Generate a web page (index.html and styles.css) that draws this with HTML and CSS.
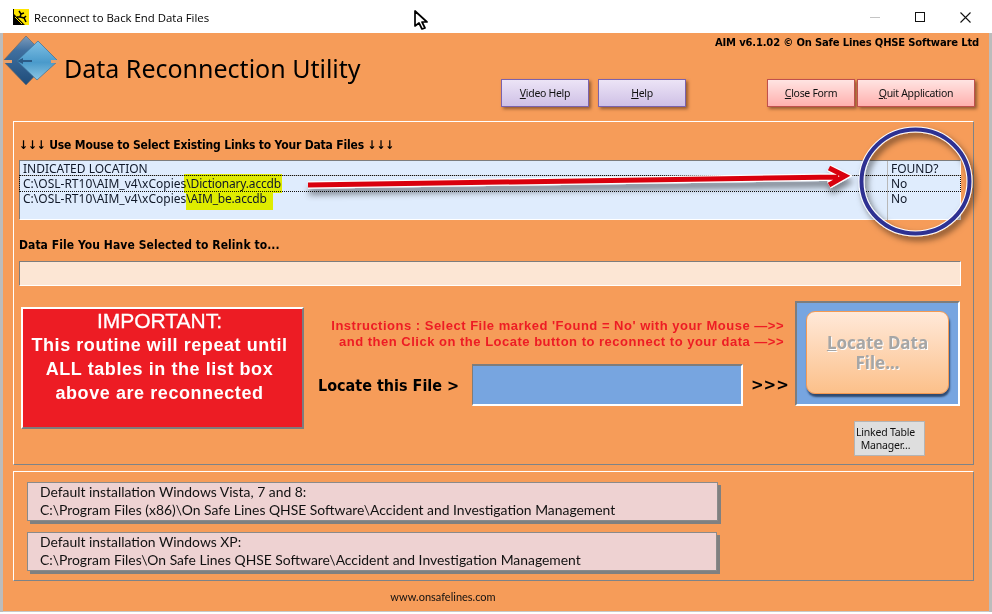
FILE: index.html
```html
<!DOCTYPE html>
<html lang="en">
<head>
<meta charset="utf-8">
<title>Reconnect to Back End Data Files</title>
<link rel="stylesheet" href="styles.css">
</head>
<body>
<div class="window">
  <header class="titlebar">
    <svg class="app-icon" width="16" height="16" viewBox="0 0 16 16"><rect width="16" height="16" fill="#ffe600"/><path d="M0 0H1V5L12 16H0Z" fill="#000"/><path d="M2 8 9 15" stroke="#ffe600" stroke-width="1"/><path d="M6 2 8 5 7 8 11 9 13 13M8 5 11 4M7 8 4 8M11 9 13 7" stroke="#000" stroke-width="1.5" fill="none"/></svg>
    <span class="title-text">Reconnect to Back End Data Files</span>
    <div class="win-controls">
      <span class="win-min"></span>
      <span class="win-max"></span>
      <svg class="win-close" width="11" height="11" viewBox="0 0 11 11"><path d="M.5.5l10 10M10.5.5l-10 10" stroke="#111" stroke-width="1.1"/></svg>
    </div>
  </header>
  <main class="form">
    <section class="form-head">
      <div class="brand">
        <svg class="logo" width="56" height="50" viewBox="0 0 56 50">
          <defs>
            <linearGradient id="lg1" x1="0" y1="0" x2="0" y2="1"><stop offset="0" stop-color="#7d9cbc"/><stop offset=".3" stop-color="#3f6f9f"/><stop offset="1" stop-color="#1f4c7a"/></linearGradient>
            <linearGradient id="lg2" x1="0" y1="0" x2="0" y2="1"><stop offset="0" stop-color="#7fc0e4"/><stop offset=".55" stop-color="#4a9acb"/><stop offset="1" stop-color="#8cc6e4"/></linearGradient>
          </defs>
          <path d="M23 0 47 24 23 49 0 25Z" fill="url(#lg1)" stroke="#6f6a68" stroke-width=".7"/>
          <path d="M35 5 55 25 34 44 14 25Z" fill="url(#lg2)" stroke="#3a6f98" stroke-width=".7"/>
          <path d="M0 24h9v3H0ZM48 24h8v3H48Z" fill="#e8a06a"/>
          <path d="M14 25 20 22v2h9v2h-9v2Z" fill="#2b5b87"/>
        </svg>
        <h1 class="app-title">Data Reconnection Utility</h1>
      </div>
      <div class="head-right">
        <p class="version">AIM v6.1.02 © On Safe Lines QHSE Software Ltd</p>
        <div class="head-buttons">
          <button class="btn btn-purple btn-help-first"><u>V</u>ideo Help</button>
          <button class="btn btn-purple btn-help-second"><u>H</u>elp</button>
          <button class="btn btn-red btn-close"><u>C</u>lose Form</button>
          <button class="btn btn-red btn-quit"><u>Q</u>uit Application</button>
        </div>
      </div>
    </section>

    <section class="panel panel-main">
      <h2 class="list-heading">↓↓↓ Use Mouse to Select Existing Links to Your Data Files ↓↓↓</h2>
      <div class="listbox">
        <div class="list-row"><span class="col-loc">INDICATED LOCATION</span><span class="col-found">FOUND?</span></div>
        <div class="list-row selected"><span class="col-loc">C:\OSL-RT10\AIM_v4\xCopies<mark class="hl-one">\Dictionary.accdb</mark></span><span class="col-found">No</span></div>
        <div class="list-row"><span class="col-loc">C:\OSL-RT10\AIM_v4\xCopies<mark class="hl-two">\AIM_be.accdb</mark></span><span class="col-found">No</span></div>
        <div class="list-row"><span class="col-loc"></span><span class="col-found"></span></div>
      </div>
      <h2 class="relink-label">Data File You Have Selected to Relink to...</h2>
      <div class="relink-input"></div>
      <div class="action-row">
        <div class="important">
          <div class="imp-title">IMPORTANT:</div>
          <div>This routine will repeat until</div>
          <div>ALL tables in the list box</div>
          <div>above are reconnected</div>
        </div>
        <div class="action-mid">
          <p class="instructions">Instructions : Select File marked 'Found = No' with your Mouse —&gt;&gt;<br>and then Click on the Locate button to reconnect to your data —&gt;&gt;</p>
          <div class="locate-line">
            <span class="locate-label">Locate this File &gt;</span>
            <div class="locate-field"></div>
            <span class="locate-arrows">&gt;&gt;&gt;</span>
          </div>
        </div>
        <div class="action-right">
          <div class="locate-box"><button class="locate-btn"><u>L</u>ocate Data File...</button></div>
          <button class="linked-btn">Linked Table Manager…</button>
        </div>
      </div>
    </section>

    <section class="panel panel-paths">
      <div class="path-card card-a">
        <div>Default installation Windows Vista, 7 and 8:</div>
        <div>C:\Program Files (x86)\On Safe Lines QHSE Software\Accident and Investigation Management</div>
      </div>
      <div class="path-card card-b">
        <div>Default installation Windows XP:</div>
        <div>C:\Program Files\On Safe Lines QHSE Software\Accident and Investigation Management</div>
      </div>
    </section>
    <footer class="site">www.onsafelines.com</footer>
  </main>

  <svg class="annotation" width="992" height="614" viewBox="0 0 992 614">
    <defs>
      <filter id="sh" x="-10%" y="-50%" width="120%" height="250%"><feDropShadow dx="1" dy="6" stdDeviation="3" flood-color="#000" flood-opacity=".45"/></filter>
      <filter id="sh2" x="-20%" y="-20%" width="140%" height="140%"><feDropShadow dx="3" dy="4" stdDeviation="3" flood-color="#000" flood-opacity=".5"/></filter>
    </defs>
    <g filter="url(#sh)">
      <path d="M308 185 L838 177 M829 168 L845 176 L829 185" fill="none" stroke="#fff" stroke-width="7.5"/>
      <path d="M308 185 L838 177 M829 168 L845 176 L829 185" fill="none" stroke="#d9000d" stroke-width="5"/>
    </g>
    <g filter="url(#sh2)">
      <ellipse cx="915.5" cy="181.5" rx="54" ry="52" fill="none" stroke="#fff" stroke-width="6"/>
    </g>
    <ellipse cx="915.5" cy="181.5" rx="54" ry="52" fill="none" stroke="#2e3192" stroke-width="4"/>
    <path d="M415 11v15l4-3 3 6 3-1-3-6h5Z" fill="#fff" stroke="#000" stroke-width="1.7" stroke-linejoin="round"/>
  </svg>
</div>
</body>
</html>
```
FILE: styles.css
```css
* { box-sizing: border-box; }
html, body { margin: 0; padding: 0; background: #fff; }
.window {
  position: relative;
  width: 992px;
  height: 614px;
  overflow: hidden;
  display: flex;
  flex-direction: column;
  font-family: "Noto Sans", sans-serif;
  color: #000;
}
.titlebar {
  height: 33px;
  flex: none;
  display: flex;
  align-items: center;
  padding: 1px 0 0 13px;
  background: #fff;
  font-family: "Open Sans", sans-serif;
  font-size: 11.4px;
}
.app-icon { margin-right: 5px; }
.win-controls { margin-left: auto; display: flex; align-items: center; }
.win-min { width: 10px; height: 1px; background: #c4c4c4; margin-right: 35px; }
.win-max { width: 10px; height: 10px; border: 1px solid #111; margin-right: 35px; }
.win-close { margin-right: 21px; }

.form {
  flex: 1;
  margin: 0 3px 2px;
  background: #f69c59;
  padding: 0 0 0 10px;
  display: flex;
  flex-direction: column;
  border-bottom: 1px solid #c9c9c9;
  box-shadow: -3px 0 0 #bcbcbc, 3px 0 0 #bcbcbc;
}
.form-head { height: 88px; flex: none; display: flex; justify-content: space-between; }
.brand { display: flex; align-items: flex-start; margin-left: -10px; }
.logo { margin-top: 3px; flex: none; }
.app-title {
  margin: 17px 0 0 5px;
  font-size: 25px;
  line-height: 36px;
  font-weight: 400;
  white-space: nowrap;
}
.head-right { display: flex; flex-direction: column; align-items: flex-end; padding-right: 10px; }
.version {
  margin: 2px 0 0;
  height: 15px;
  font-family: "DejaVu Sans", sans-serif;
  font-size: 10px;
  line-height: 15px;
  font-weight: 700;
  letter-spacing: -.17px;
  white-space: nowrap;
}
.head-buttons { display: flex; margin-top: 29px; margin-right: 4px; }
.btn {
  height: 28px;
  width: 88px;
  padding: 0 0 1px;
  font-family: "Noto Sans", sans-serif;
  font-size: 10.5px;
  letter-spacing: -.3px;
  color: #111;
  border-width: 1px;
  border-style: solid;
  box-shadow: 2px 2px 3px rgba(70,40,20,.55);
}
.btn-purple { background: linear-gradient(#ece4f6, #cfc0e6); border-color: #7b62ad; }
.btn-red { background: linear-gradient(#ffe4e2, #ffb0ae); border-color: #c0504d; }
.btn-help-second { margin-left: 9px; }
.btn-close { margin-left: 81px; }
.btn-quit { margin-left: 2px; width: 118px; }

.panel {
  width: 961px;
  flex: none;
  background: #f69c59;
  border: 1px solid;
  border-color: #fff #7d8388 #7d8388 #fff;
}
.panel-main { height: 344px; padding: 0 12px 0 5px; }
.list-heading, .relink-label {
  margin: 0;
  font-family: "DejaVu Sans Condensed", "DejaVu Sans", sans-serif;
  font-size: 12px;
  line-height: 15px;
  font-weight: 700;
}
.list-heading { margin-top: 16px; letter-spacing: -.17px; }
.listbox {
  margin-top: 7px;
  height: 60px;
  background: #dfecfd;
  border: 1px solid;
  border-color: #7d7d7d #fff #fff #7d7d7d;
  font-family: "Noto Sans", sans-serif;
  font-size: 12px;
  color: #101828;
}
.list-row { display: flex; height: 15px; line-height: 15px; white-space: nowrap; }
.list-row:first-child { border-bottom: 1px solid #b5b5b5; }
.list-row.selected { outline: 1px dotted #111; }
.col-loc { width: 868px; height: 100%; padding-left: 3px; border-right: 1px solid #b8b8b8; }
.col-found { padding-left: 3px; }
.list-row:last-child .col-loc { height: 14px; }
mark { background: #ffff00; color: inherit; letter-spacing: -.18px; mix-blend-mode: multiply; }
.hl-one { padding: 0 1px 1px 2px; margin-left: -2px; box-shadow: 0 -1px 0 #ffff00; }
.hl-two { padding: 0 6px 3px 0; }
.relink-label { margin-top: 18px; letter-spacing: .07px; }
.relink-input {
  margin-top: 8px;
  height: 25px;
  background: #fce6d4;
  border: 1px solid;
  border-color: #7d7d7d #fff #fff #7d7d7d;
}
.action-row { display: flex; margin-top: 15px; }
.important {
  width: 283px;
  height: 122px;
  margin: 6px 0 0 2px;
  padding-right: 6px;
  flex: none;
  background: #ed1c24;
  border: 2px solid;
  border-color: #fff #7d7d7d #7d7d7d #fff;
  color: #fff;
  text-align: center;
  font-family: "Liberation Sans", sans-serif;
  font-size: 18px;
  line-height: 24px;
  font-weight: 700;
  letter-spacing: .57px;
}
.imp-title { font-weight: 400; font-size: 21px; letter-spacing: 0; -webkit-text-stroke: .3px #fff; }
.action-mid { width: 491px; flex: none; display: flex; flex-direction: column; align-items: flex-end; }
.instructions {
  margin: 17px 11px 0 0;
  text-align: right;
  color: #ed1c24;
  font-family: "Liberation Sans", sans-serif;
  font-size: 13px;
  line-height: 16px;
  font-weight: 700;
  letter-spacing: .5px;
  white-space: nowrap;
}
.locate-line { display: flex; align-items: center; width: 477px; margin-top: 14px; }
.locate-label {
  width: 154px;
  font-family: "DejaVu Sans Condensed", "DejaVu Sans", sans-serif;
  font-size: 16px;
  font-weight: 700;
  white-space: nowrap;
}
.locate-field {
  width: 271px;
  height: 42px;
  background: #77a5e0;
  border: 1px solid;
  border-color: #7d7d7d #fff #fff #7d7d7d;
  border-width: 2px 2px 2px 1px;
}
.locate-arrows { margin-left: 8px; font-family: "DejaVu Sans", sans-serif; font-size: 15px; font-weight: 700; }
.action-right { width: 165px; flex: none; display: flex; flex-direction: column; align-items: flex-start; }
.locate-box {
  width: 165px;
  height: 105px;
  padding: 8px 8px 0 9px;
  background: #77a5e0;
  border: 2px solid;
  border-color: #7d7d7d #fff #fff #7d7d7d;
}
.locate-btn {
  width: 143px;
  height: 83px;
  padding: 0 14px;
  background: linear-gradient(#ffe9d9, #fcc08a);
  border: 1px solid #f59a52;
  border-radius: 9px;
  box-shadow: 1px 3px 2px #2f4a70;
  color: #a6a6a6;
  text-shadow: 1px 1px 0 #fff;
  font-family: "Noto Sans", sans-serif;
  font-size: 17px;
  line-height: 20px;
  font-weight: 700;
}
.linked-btn {
  width: 71px;
  height: 35px;
  margin: 15px 0 0 59px;
  padding: 0 8px 0 0;
  background: #dedede;
  border: 1px solid #b4b4b4;
  font-family: "Noto Sans", sans-serif;
  font-size: 10.5px;
  letter-spacing: -.2px;
  line-height: 13px;
  color: #111;
}

.panel-paths { height: 110px; margin-top: 6px; padding: 10px 0 0 13px; }
.path-card {
  height: 39px;
  padding: 0 0 0 12px;
  background: #eed2d2;
  border: 1px solid #8a8a8a;
  box-shadow: 3px 3px 0 #808080;
  font-family: "Lato", sans-serif;
  font-size: 13.9px;
  line-height: 18px;
  color: #111;
  white-space: nowrap;
}
.card-a { width: 691px; }
.card-b { width: 690px; margin-top: 11px; }
.site {
  margin-top: 9px;
  text-align: center;
  width: 860px;
  font-family: "Lato", sans-serif;
  font-size: 11px;
  line-height: 14px;
  color: #111;
}
.annotation { position: absolute; left: 0; top: 0; pointer-events: none; }
```
